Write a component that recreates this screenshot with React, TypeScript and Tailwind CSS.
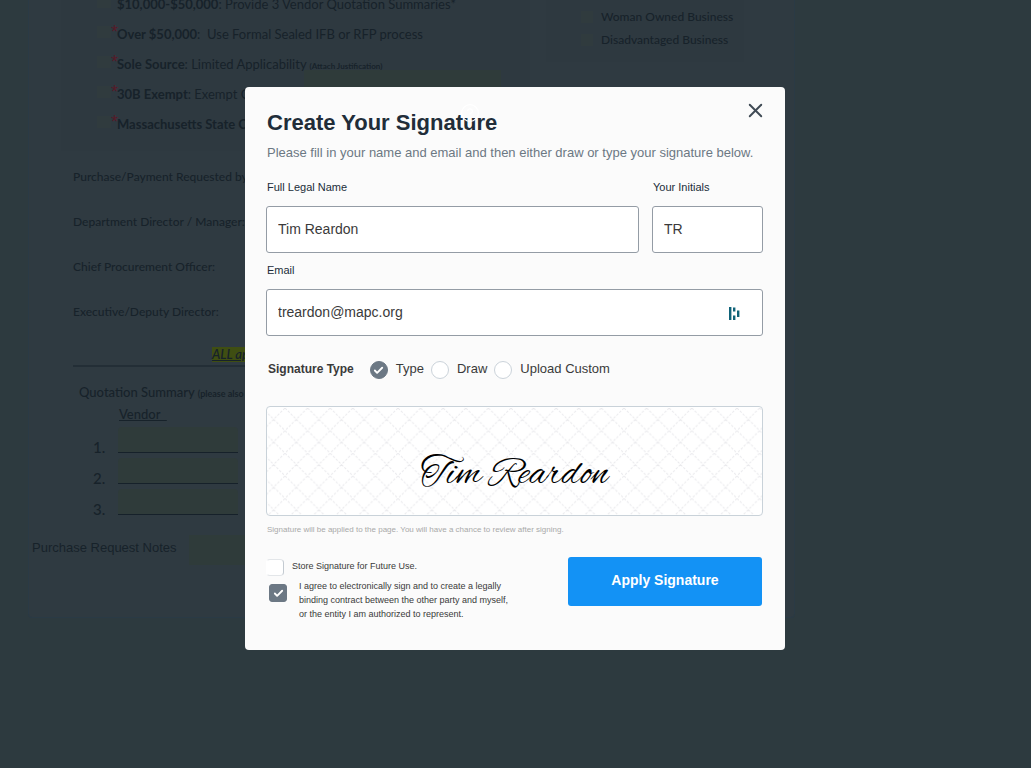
import { useState } from 'react';
import { Check, CircleHelp, X } from 'lucide-react';

const PURCHASE_METHODS = [
  { name: '$10,000-$50,000', detail: 'Provide 3 Vendor Quotation Summaries*', required: false },
  { name: 'Over $50,000', detail: ' Use Formal Sealed IFB or RFP process', required: true },
  { name: 'Sole Source', detail: 'Limited Applicability', note: '(Attach Justification)', required: true },
  { name: '30B Exempt', detail: 'Exempt Category', required: true, field: true },
  { name: 'Massachusetts State Contract', detail: '', required: true },
];

const SIGNERS = [
  'Purchase/Payment Requested by:',
  'Department Director / Manager:',
  'Chief Procurement Officer:',
  'Executive/Deputy Director:',
];

const SIGNATURE_TYPES = ['Type', 'Draw', 'Upload Custom'];

function DocumentPage() {
  return (
    <div
      aria-hidden="true"
      className="ml-7 mr-[236px] h-[618px] overflow-hidden rounded-b border-x border-b border-[#2a3a45] bg-[#2f3a41] font-['Lato','Liberation_Sans',sans-serif] text-xs font-medium text-[#17222a]"
    >
      <div className="flex items-start gap-4 pl-8 pr-[50px]">
        <div className="-mt-[11px] h-[162px] w-[469px] shrink-0 bg-[#2e3940] pl-9">
          {PURCHASE_METHODS.map(method => (
            <div key={method.name} className="flex h-[30px] items-center whitespace-nowrap">
              <span className="mb-1 h-3 w-3.5 shrink-0 bg-[#303b3e]" />
              <span className="mb-1 h-6 w-[6px] shrink-0 font-['Liberation_Sans',Arial,sans-serif] text-lg leading-6 text-[#571a28]">
                {method.required && '*'}
              </span>
              <span className="whitespace-pre pt-0.5 text-[13px] font-normal">
                <b>{method.name}</b>: {method.detail}{' '}
                {method.note && <b className="text-[8px]">{method.note}</b>}
              </span>
              {method.field && <span className="mb-5 ml-2 h-7 w-[197px] bg-[#2f3b3a]" />}
            </div>
          ))}
        </div>
        <div className="-mt-[18px] h-20 grow bg-[#2e3940] pl-[35px]">
          {['Minority Business', 'Woman Owned Business', 'Disadvantaged Business'].map(kind => (
            <div key={kind} className="flex h-[23px] items-center gap-2 whitespace-nowrap">
              <span className="h-3 w-3 bg-[#303b3e]" />
              {kind}
            </div>
          ))}
        </div>
      </div>

      <div className="pl-11 pt-[3px]">
        {SIGNERS.map(signer => (
          <div key={signer} className="flex h-[45px] items-center">{signer}</div>
        ))}
      </div>

      <div className="ml-11 mr-11 mt-[13px] border-b-2 border-[#232e36] pb-[3px] pl-[139px]">
        <span className="block h-[15px] w-[260px] bg-[#3f4e12] text-[13px] leading-[15px] italic underline">
          <b className="font-semibold">ALL approvals required</b>
        </span>
      </div>

      <div className="pl-[50px] pt-[15px]">
        <p className="text-[13px] leading-5">
          Quotation Summary <b className="text-[9px]">(please also attach quotes)</b>
        </p>
        <p className="ml-10 whitespace-pre text-[13px] leading-5 underline">Vendor  </p>
        <div className="mt-[3px] flex flex-col gap-[5px]">
          {[1, 2, 3].map(n => (
            <div key={n} className="flex items-end">
              <span className="w-[39px] pl-3.5 text-[15px] leading-3">{n}.</span>
              <span className="h-[26px] w-[120px] rounded-t border-b border-[#16212a] bg-[#2f3b3a]" />
            </div>
          ))}
        </div>
      </div>

      <div className="mt-5 flex items-start gap-3 pl-[3px] font-['Liberation_Sans',Arial,sans-serif] text-[13px]">
        <span className="leading-[26px]">Purchase Request Notes</span>
        <span className="h-[30px] w-[400px] bg-[#2f3b3a]" />
      </div>
    </div>
  );
}

function PasswordManagerIcon() {
  return (
    <svg width="11" height="13" viewBox="0 0 11 13" fill="#0f6379" aria-hidden="true">
      <rect x="0" y="0" width="2.4" height="13" />
      <rect x="4" y="0.5" width="2.4" height="4" />
      <rect x="4" y="8.5" width="2.4" height="4.5" />
      <rect x="8" y="3.5" width="2.4" height="6.5" />
    </svg>
  );
}

function SignatureGrid() {
  return (
    <svg className="absolute inset-0 h-full w-full" aria-hidden="true">
      <defs>
        <pattern id="lattice" x="18" y="1" width="22.6" height="22.6" patternUnits="userSpaceOnUse">
          <path d="M0 0L22.6 22.6M22.6 0L0 22.6" stroke="#e9e9ec" strokeWidth="1" strokeDasharray="2.5 1.5" />
        </pattern>
      </defs>
      <rect width="100%" height="100%" fill="url(#lattice)" />
    </svg>
  );
}

export default function App() {
  const [name, setName] = useState('Tim Reardon');
  const [initials, setInitials] = useState('TR');
  const [email, setEmail] = useState('treardon@mapc.org');
  const [signatureType, setSignatureType] = useState('Type');
  const [store, setStore] = useState(false);
  const [agreed, setAgreed] = useState(true);

  return (
    <div className="min-h-screen overflow-hidden bg-[#2d3a3f]">
      <DocumentPage />

      <div className="fixed inset-0 flex items-start justify-center overflow-y-auto pr-px pt-[87px] font-['Liberation_Sans',Arial,sans-serif]">
        <form
          role="dialog"
          aria-labelledby="signature-title"
          onSubmit={event => event.preventDefault()}
          className="w-full max-w-[540px] rounded bg-[#fbfbfb] pb-[29px] pl-[21px] pr-[22px] pt-5 text-[#3a3a3a]"
        >
          <div className="flex items-start justify-between">
            <div className="relative pl-px">
              <h1 id="signature-title" className="text-[22px] font-bold leading-8 text-[#212d39]">
                Create Your Signature
              </h1>
              <CircleHelp size={20} strokeWidth={1.5} className="absolute -top-1 right-[17px] text-white" />
            </div>
            <button type="button" aria-label="Close" className="-mt-2 -mr-1 text-[#3f4a54]">
              <X size={23} strokeWidth={2} />
            </button>
          </div>
          <p className="pl-px text-[13px] leading-7 text-[#6c7883]">
            Please fill in your name and email and then either draw or type your signature below.
          </p>

          <div className="mt-3 flex gap-[13px]">
            <div className="grow">
              <label htmlFor="name" className="block pl-px text-[11px] leading-4 text-[#212d39]">Full Legal Name</label>
              <input
                id="name"
                value={name}
                onChange={event => setName(event.target.value)}
                className="mt-[11px] h-[47px] w-full rounded-[3px] border border-[#949ca5] bg-white px-[11px] pb-0.5 text-sm"
              />
            </div>
            <div className="w-[111px]">
              <label htmlFor="initials" className="block pl-px text-[11px] leading-4 text-[#212d39]">Your Initials</label>
              <input
                id="initials"
                value={initials}
                onChange={event => setInitials(event.target.value)}
                className="mt-[11px] h-[47px] w-full rounded-[3px] border border-[#949ca5] bg-white px-[11px] pb-0.5 text-sm"
              />
            </div>
          </div>

          <label htmlFor="email" className="mt-[9px] block pl-px text-[11px] leading-4 text-[#212d39]">Email</label>
          <div className="relative mt-[11px]">
            <input
              id="email"
              type="email"
              value={email}
              onChange={event => setEmail(event.target.value)}
              className="block h-[47px] w-full rounded-[3px] border border-[#949ca5] bg-white pb-0.5 pl-[11px] pr-12 text-sm"
            />
            <span className="absolute right-[23px] top-[18px]">
              <PasswordManagerIcon />
            </span>
          </div>

          <fieldset className="mt-[22px] flex items-center pl-0.5 text-[13px]">
            <legend className="float-left mr-4 text-xs font-bold leading-[22px]">Signature Type</legend>
            {SIGNATURE_TYPES.map(type => (
              <label key={type} className="mr-[7px] flex items-center gap-2">
                <span className="mt-0.5 grid place-items-center">
                  <input
                    type="radio"
                    name="signature-type"
                    checked={signatureType === type}
                    onChange={() => setSignatureType(type)}
                    className="col-start-1 row-start-1 h-[18px] w-[18px] appearance-none rounded-full border border-[#cbd3da] bg-white checked:border-[#6c7884] checked:bg-[#6c7884]"
                  />
                  {signatureType === type && (
                    <Check size={11} strokeWidth={4} className="pointer-events-none z-10 col-start-1 row-start-1 text-white" />
                  )}
                </span>
                {type}
              </label>
            ))}
          </fieldset>

          <div className="relative mt-[26px] flex h-[110px] items-center justify-center overflow-hidden rounded border border-[#c9d2d9] bg-white">
            <SignatureGrid />
            <span className="relative mt-7 font-['Alex_Brush','Liberation_Serif',cursive] text-[40px] text-black">
              {name}
            </span>
          </div>
          <p className="mt-2 pl-px text-[8px] leading-3 text-[#a9a9a9]">
            Signature will be applied to the page. You will have a chance to review after signing.
          </p>

          <div className="mt-[21px] flex items-start justify-between">
            <div className="text-[9px] leading-[14px]">
              <label className="flex items-start gap-2">
                <input
                  type="checkbox"
                  checked={store}
                  onChange={event => setStore(event.target.checked)}
                  className="mt-0.5 h-[17px] w-[18px] appearance-none rounded-sm border border-[#e3e6e9] border-l-white border-r-[#c3cad1] bg-white checked:bg-[#6c7884]"
                />
                <span className="pt-0.5">Store Signature for Future Use.</span>
              </label>
              <label className="flex items-start gap-3 pl-[3px] pt-[3px]">
                <span className="mt-[5px] grid place-items-center">
                  <input
                    type="checkbox"
                    checked={agreed}
                    onChange={event => setAgreed(event.target.checked)}
                    className="col-start-1 row-start-1 h-[18px] w-[18px] appearance-none rounded-[3px] border border-[#6c7884] bg-white checked:bg-[#6c7884]"
                  />
                  {agreed && (
                    <Check size={11} strokeWidth={4} className="pointer-events-none z-10 col-start-1 row-start-1 text-white" />
                  )}
                </span>
                <span className="w-[216px]">
                  I agree to electronically sign and to create a legally binding contract between the other party and
                  myself, or the entity I am authorized to represent.
                </span>
              </label>
            </div>
            <button
              type="submit"
              className="mr-px h-[49px] w-[194px] rounded-[3px] bg-[#1392f5] pb-1 text-sm font-bold text-white"
            >
              Apply Signature
            </button>
          </div>
        </form>
      </div>
    </div>
  );
}
